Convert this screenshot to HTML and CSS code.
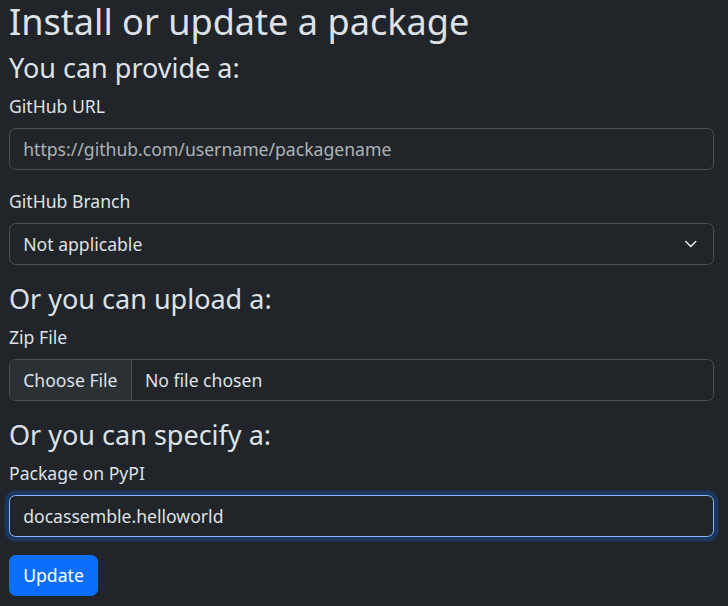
FILE: index.html
```html
<!DOCTYPE html>
<html lang="en">
<head>
<meta charset="utf-8">
<title>Install or update a package</title>
<link rel="stylesheet" href="styles.css">
</head>
<body>
<main class="page">
  <h1 class="title">Install or update a package</h1>
  <h3 class="section">You can provide a:</h3>
  <div class="field">
    <label class="form-label" for="giturl">GitHub URL</label>
    <input class="form-control" id="giturl" type="text" placeholder="https://github.com/username/packagename">
  </div>
  <div class="field">
    <label class="form-label" for="gitbranch">GitHub Branch</label>
    <div class="form-select" id="gitbranch">Not applicable
      <svg class="chevron" viewBox="0 0 16 16" width="17.6" height="13.2" preserveAspectRatio="xMidYMid meet"><path fill="none" stroke="#dee2e6" stroke-linecap="round" stroke-linejoin="round" stroke-width="2" d="m2 5 6 6 6-6"/></svg>
    </div>
  </div>
  <h3 class="section">Or you can upload a:</h3>
  <div class="field">
    <label class="form-label">Zip File</label>
    <div class="form-file">
      <span class="file-btn">Choose File</span>
      <span class="file-name">No file chosen</span>
    </div>
  </div>
  <h3 class="section">Or you can specify a:</h3>
  <div class="field">
    <label class="form-label" for="pypi">Package on PyPI</label>
    <input class="form-control focused" id="pypi" type="text" value="docassemble.helloworld">
  </div>
  <button class="btn-primary" type="button">Update</button>
</main>
</body>
</html>
```
FILE: styles.css
```css
html {
  font-size: 17.6px;
}
* {
  box-sizing: border-box;
}
body {
  margin: 0;
  background: #212529;
  color: #dee2e6;
  font-family: "Noto Sans", "Open Sans", sans-serif;
  font-size: 1rem;
  line-height: 1.5;
}
.page {
  padding: 0 14px 0 9px;
}
.title {
  margin: 0 0 0.5rem;
  font-size: 36.1px;
  font-weight: 400;
  line-height: 1.2;
}
.section {
  margin: 0 0 0.5rem;
  font-size: 27px;
  font-weight: 400;
  line-height: 1.2;
}
.field {
  margin-bottom: 1rem;
}
.form-label {
  display: inline-block;
  margin-bottom: 0.5rem;
}
.form-control,
.form-select,
.form-file {
  display: block;
  width: 100%;
  height: 42px;
  padding: 0.375rem 0.75rem;
  font-family: inherit;
  font-size: 1rem;
  line-height: 1.5;
  color: #dee2e6;
  background: #212529;
  border: 1px solid #495057;
  border-radius: 0.375rem;
  outline: none;
  margin: 0;
}
.form-control::placeholder {
  color: rgba(222, 226, 230, 0.75);
  opacity: 1;
}
.form-control.focused {
  border-color: #86b7fe;
  box-shadow: 0 0 0 0.25rem rgba(13, 110, 253, 0.25);
}
.form-select {
  position: relative;
}
.chevron {
  position: absolute;
  right: 0.75rem;
  top: 50%;
  transform: translateY(-50%);
}
.form-file {
  display: flex;
  overflow: hidden;
}
.file-btn {
  margin: -0.375rem 0.75rem -0.375rem -0.75rem;
  padding: 0.375rem 0.75rem;
  background: #2b3035;
  border-right: 1px solid #495057;
}
.btn-primary {
  display: inline-block;
  padding: 0.375rem 0.75rem;
  font-family: inherit;
  font-size: 1rem;
  line-height: 1.5;
  color: #fff;
  background: #0d6efd;
  border: 1px solid #0d6efd;
  border-radius: 0.375rem;
  margin: 0;
}
```
